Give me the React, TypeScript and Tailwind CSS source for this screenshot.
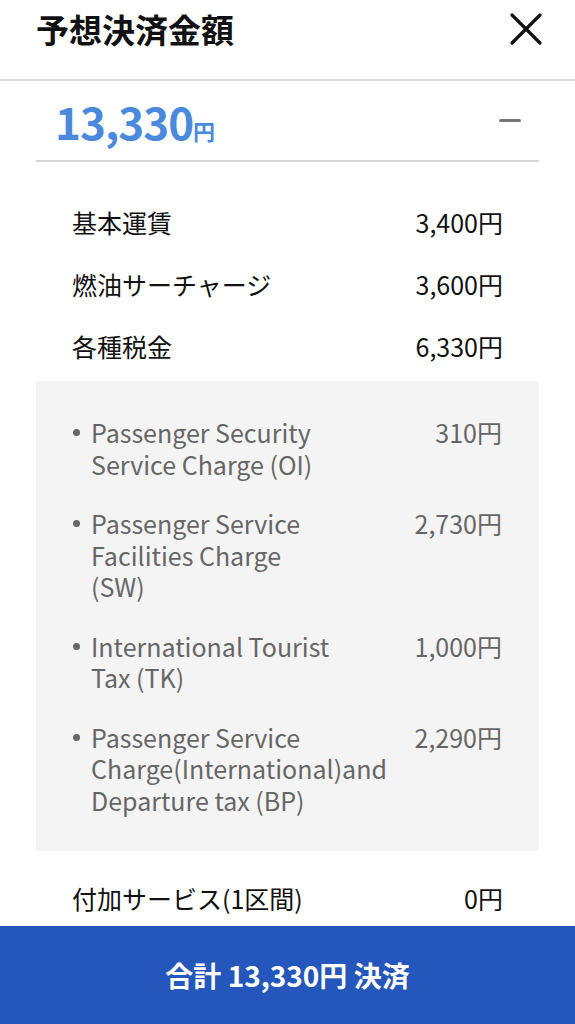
import React from "react";

const font = { fontFamily: '"Noto Sans CJK JP", "Noto Sans", sans-serif' };

function Row({ label, value }: { label: string; value: string }) {
  return (
    <div className="flex h-[62px] items-center justify-between px-[36px] text-[25px] text-[#111]">
      <span>{label}</span>
      <span>{value}</span>
    </div>
  );
}

function TaxItem({ lines, value }: { lines: string; value: string }) {
  return (
    <div className="flex items-start justify-between">
      <div className="flex items-start">
        <span className="mt-[12px] mr-[11px] h-[7px] w-[7px] shrink-0 rounded-full bg-[#666]" />
        <span className="w-[242px] text-[25px] leading-[31.5px] text-[#666]">{lines}</span>
      </div>
      <span className="text-[25px] leading-[31.5px] text-[#666]">{value}</span>
    </div>
  );
}

export default function App() {
  return (
    <div style={font} className="flex h-[1024px] w-[575px] flex-col overflow-hidden bg-white">
      <div className="flex-1 overflow-hidden">
        <div className="flex h-[81px] items-start justify-between border-b-2 border-[#d9d9d9] pt-[12px] pl-[36px] pr-[32px]">
          <h1 className="text-[33px] font-bold leading-[34px] text-[#111]">予想決済金額</h1>
          <svg width="34" height="34" viewBox="0 0 34 34" fill="none" stroke="#111" strokeWidth="3.2" strokeLinecap="round">
            <path d="M3 3 L31 31 M31 3 L3 31" />
          </svg>
        </div>
        <div className="mx-[36px] flex h-[81px] items-center justify-between border-b-2 border-[#d4d4d4] pl-[19px] pr-[18px]">
          <div className="flex items-baseline text-[#4a89dc]">
            <span className="text-[44px] font-bold leading-none tracking-[-1px]">13,330</span>
            <span className="text-[22px] font-bold leading-none">円</span>
          </div>
          <span className="h-[3px] w-[22px] rounded-full bg-[#777]" />
        </div>
        <div className="mx-[36px] pt-[30px]">
          <Row label="基本運賃" value="3,400円" />
          <Row label="燃油サーチャージ" value="3,600円" />
          <Row label="各種税金" value="6,330円" />
          <div className="mt-[3px] flex flex-col gap-[28px] bg-[#f4f4f4] pt-[36px] pb-[35px] pl-[37px] pr-[37px]">
            <TaxItem lines="Passenger Security Service Charge (OI)" value="310円" />
            <TaxItem lines="Passenger Service Facilities Charge (SW)" value="2,730円" />
            <TaxItem lines="International Tourist Tax (TK)" value="1,000円" />
            <TaxItem lines="Passenger Service Charge(International)and Departure tax (BP)" value="2,290円" />
          </div>
          <div className="mt-[17px]">
            <Row label="付加サービス(1区間)" value="0円" />
          </div>
        </div>
      </div>
      <button className="flex h-[98px] w-full shrink-0 items-center justify-center bg-[#2456bb] text-[28px] font-bold text-white">
        合計 13,330円 決済
      </button>
    </div>
  );
}
